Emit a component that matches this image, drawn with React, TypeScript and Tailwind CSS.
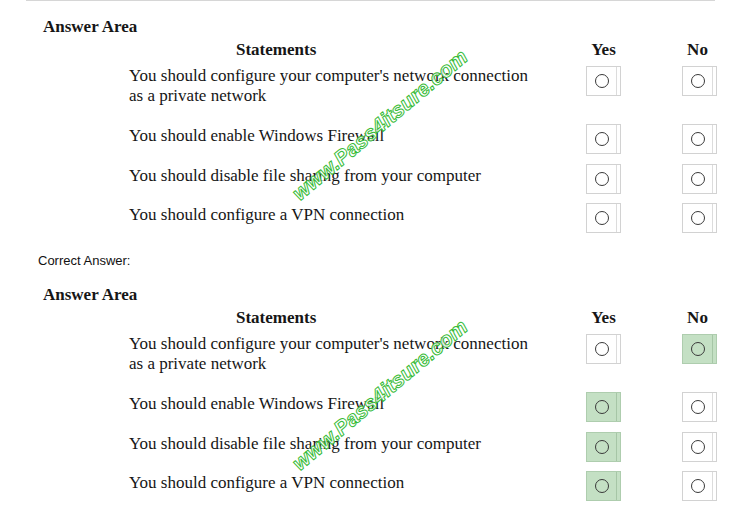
import React from "react";

interface Statement {
  lines: string[];
  answer: "yes" | "no";
}

const STATEMENTS: Statement[] = [
  {
    lines: ["You should configure your computer's network connection", "as a private network"],
    answer: "no",
  },
  { lines: ["You should enable Windows Firewall"], answer: "yes" },
  { lines: ["You should disable file sharing from your computer"], answer: "yes" },
  { lines: ["You should configure a VPN connection"], answer: "yes" },
];

// gap above each row, in px (box tops land on the same spots in both areas)
const ROW_GAPS = ["mt-[6px]", "mt-[18px]", "mt-[10px]", "mt-[9px]"];

function RadioBox({ checked }: { checked: boolean }) {
  return (
    <div
      className={`relative w-[35px] h-[30px] border flex items-center justify-center ${
        checked ? "bg-[#c4e0c4] border-[#aecdae]" : "bg-white border-[#d2d2d2]"
      }`}
    >
      <div
        className={`absolute right-[3px] top-0 bottom-0 w-px ${
          checked ? "bg-[#a6c6a6]" : "bg-[#dcdcdc]"
        }`}
      />
      <div className="w-[14px] h-[14px] rounded-full border border-[#3a3a3a] -ml-[3px]" />
    </div>
  );
}

function AnswerArea({ showAnswers }: { showAnswers: boolean }) {
  return (
    <div className="font-['Liberation_Serif',serif] text-[#161616]">
      <div className="pl-[43px] text-[17px] leading-[20px] font-bold mt-[16px]">Answer Area</div>

      {/* column headings */}
      <div className="flex mt-[3px] text-[17px] leading-[20px] font-bold">
        <div className="w-[586px] pl-[236px]">Statements</div>
        <div className="w-[35px] text-center">Yes</div>
        <div className="w-[61px]" />
        <div className="w-[35px] text-center pr-[4px]">No</div>
      </div>

      {STATEMENTS.map((s, i) => (
        <div key={i} className={`flex items-start ${ROW_GAPS[i]}`}>
          <div className={`w-[586px] pl-[129px] text-[17px] leading-[20px] ${i === 0 ? "" : "mt-[2px]"}`}>
            {s.lines.map((l) => (
              <div key={l}>{l}</div>
            ))}
          </div>
          <RadioBox checked={showAnswers && s.answer === "yes"} />
          <div className="w-[61px]" />
          <RadioBox checked={showAnswers && s.answer === "no"} />
        </div>
      ))}
    </div>
  );
}

function Watermark({ top }: { top: string }) {
  return (
    <div
      className={`absolute left-[255px] ${top} w-[250px] h-[26px] text-center -rotate-[40deg] font-['Liberation_Sans',sans-serif] font-bold italic text-[21px] leading-[26px] text-white/80 [-webkit-text-stroke:1px_#36bb36] pointer-events-none`}
    >
      www.Pass4itsure.com
    </div>
  );
}

export default function App() {
  return (
    <div className="relative w-[741px] h-[523px] bg-white overflow-hidden">
      <div className="mx-[26px] h-px bg-[#d6d6d6]" />

      <AnswerArea showAnswers={false} />

      <div className="mt-[20px] pl-[38px] font-['Liberation_Sans',sans-serif] text-[13px] leading-[16px] text-[#111]">
        Correct Answer:
      </div>

      <div className="mt-[1px]">
        <AnswerArea showAnswers={true} />
      </div>

      <Watermark top="top-[112px]" />
      <Watermark top="top-[382px]" />
    </div>
  );
}
